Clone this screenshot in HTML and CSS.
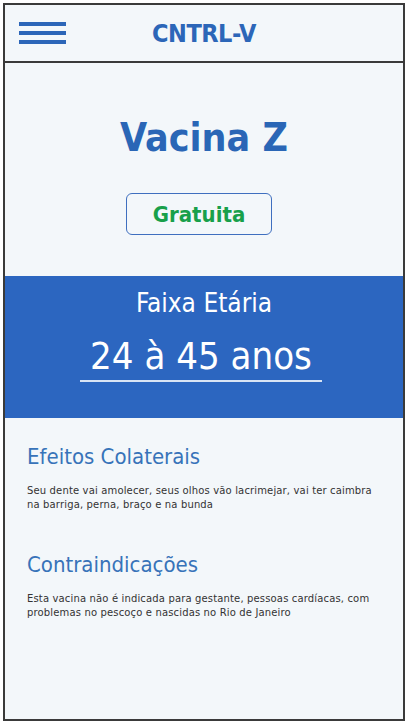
FILE: index.html
```html
<!DOCTYPE html>
<html lang="pt">
<head>
<meta charset="utf-8">
<title>CNTRL-V</title>
<link rel="stylesheet" href="styles.css">
</head>
<body>
<div class="frame">
  <header class="topbar">
    <div class="burger"><span></span><span></span><span></span></div>
    <h1 class="brand">CNTRL-V</h1>
  </header>
  <main>
    <section class="hero">
      <h2 class="title">Vacina Z</h2>
      <div class="badge">Gratuita</div>
    </section>
    <section class="band">
      <div class="band-label">Faixa Etária</div>
      <div class="band-value">24 à 45 anos</div>
    </section>
    <section class="info">
      <h3>Efeitos Colaterais</h3>
      <p>Seu dente vai amolecer, seus olhos vão lacrimejar, vai ter caimbra na barriga, perna, braço e na bunda</p>
    </section>
    <section class="info">
      <h3>Contraindicações</h3>
      <p>Esta vacina não é indicada para gestante, pessoas cardíacas, com problemas no pescoço e nascidas no Rio de Janeiro</p>
    </section>
  </main>
</div>
</body>
</html>
```
FILE: styles.css
```css
* { box-sizing: border-box; margin: 0; padding: 0; }
html, body { background: #ffffff; }
body { padding: 3px; font-family: "DejaVu Sans Condensed", "DejaVu Sans", sans-serif; }
.frame {
  width: 402px;
  height: 718px;
  border: 2px solid #3a3a3a;
  background: #f3f7fa;
  display: flex;
  flex-direction: column;
}
.topbar {
  height: 58px;
  border-bottom: 2px solid #3a3a3a;
  display: flex;
  align-items: center;
  position: relative;
}
.burger {
  margin-left: 14px;
  width: 47px;
  display: flex;
  flex-direction: column;
  gap: 5px;
}
.burger span { display: block; height: 4px; background: #2c66b8; }
.brand {
  position: absolute;
  left: 0; right: 0;
  text-align: center;
  font-size: 25px;
  font-weight: bold;
  color: #2c66b8;
  letter-spacing: -0.5px;
  pointer-events: none;
}
.hero {
  display: flex;
  flex-direction: column;
  align-items: center;
  padding-top: 50px;
  height: 213px;
}
.title {
  font-size: 39px;
  font-weight: bold;
  color: #2a66b6;
  line-height: 50px;
}
.badge {
  margin-top: 30px;
  margin-right: 10px;
  width: 146px;
  height: 42px;
  border: 1px solid #3f6fbf;
  border-radius: 6px;
  display: flex;
  align-items: center;
  justify-content: center;
  color: #18a04a;
  font-weight: bold;
  font-size: 22px;
}
.band {
  background: #2c66c0;
  height: 142px;
  display: flex;
  flex-direction: column;
  align-items: center;
  color: #ffffff;
  padding-top: 10px;
}
.band-label { font-size: 26px; line-height: 34px; }
.band-value {
  margin-top: 14px;
  margin-right: 6px;
  font-size: 38px;
  line-height: 44px;
  padding: 0 10px 2px;
  width: 242px;
  text-align: center;
  border-bottom: 2px solid #d9e4f4;
}
.info { padding: 24px 22px 0 22px; }
.info + .info { padding-top: 38px; }
.info h3 {
  font-weight: normal;
  font-size: 22px;
  color: #3773b9;
  line-height: 30px;
}
.info p {
  margin-top: 12px;
  font-family: "DejaVu Sans", sans-serif;
  font-size: 10px;
  line-height: 14px;
  letter-spacing: 0.15px;
  color: #333333;
}
```
